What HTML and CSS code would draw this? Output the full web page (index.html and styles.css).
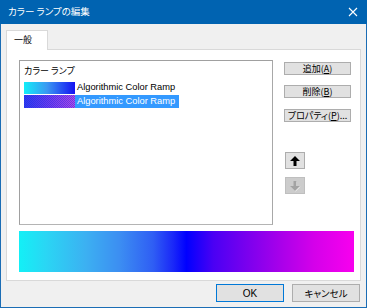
FILE: index.html
```html
<!DOCTYPE html>
<html lang="ja">
<head>
<meta charset="utf-8">
<title>カラー ランプの編集</title>
<link rel="stylesheet" href="styles.css">
</head>
<body>
<div class="window">
  <div class="titlebar">
    <span class="title">カラー ランプの編集</span>
    <svg class="close" width="10" height="10" viewBox="0 0 10 10"><path d="M1 1 L9 9 M9 1 L1 9" stroke="#fff" stroke-width="1.1" fill="none"/></svg>
  </div>
  <div class="client">
    <div class="tabs"><div class="tab">一般</div></div>
    <div class="panel">
      <div class="top">
        <div class="listbox">
          <div class="list-head">カラー ランプ</div>
          <div class="row">
            <span class="swatch sw1"></span><span class="label">Algorithmic Color Ramp</span>
          </div>
          <div class="row selected">
            <span class="swatch sw2"></span><span class="label">Algorithmic Color Ramp</span>
          </div>
        </div>
        <div class="side">
          <button class="btn">追加(<u>A</u>)</button>
          <button class="btn">削除(<u>B</u>)</button>
          <button class="btn">プロパティ(<u>P</u>)...</button>
          <div class="arrows">
            <button class="abtn"><svg width="12" height="12" viewBox="0 0 12 12"><path d="M6 1 L11 6 H7.5 V11 H4.5 V6 H1 Z" fill="#000"/></svg></button>
            <button class="abtn disabled"><svg width="12" height="12" viewBox="0 0 12 12"><path d="M6.5 11.5 L11.5 6.5 H8 V1.5 H5 V6.5 H1.5 Z" fill="#f4f4f4"/><path d="M6 11 L11 6 H7.5 V1 H4.5 V6 H1 Z" fill="#a3a3a3"/></svg></button>
          </div>
        </div>
      </div>
      <div class="preview"></div>
    </div>
    <div class="footer">
      <button class="fbtn default">OK</button>
      <button class="fbtn">キャンセル</button>
    </div>
  </div>
</div>
</body>
</html>
```
FILE: styles.css
```css
* { box-sizing: border-box; }
html, body { margin: 0; padding: 0; background: #f0f0f0; }
body {
  font-family: "Noto Sans CJK JP", "Liberation Sans", sans-serif;
  font-feature-settings: "palt";
  font-size: 9px;
}
.window {
  width: 367px;
  height: 308px;
  border: 1px solid #1b6db5;
  border-top: none;
  display: flex;
  flex-direction: column;
  background: #f0f0f0;
}
.titlebar {
  height: 24px;
  background: #0063b1;
  margin: 0 -1px;
  display: flex;
  align-items: center;
  justify-content: space-between;
  padding: 0 9px 0 8px;
  color: #fff;
}
.title { font-size: 9.5px; line-height: 1; margin-top: -1px; }
.close { display: block; margin-top: -1px; }
.client {
  flex: 1;
  padding: 6px 5px 0 5px;
  display: flex;
  flex-direction: column;
}
.tabs { display: flex; height: 19px; }
.tab {
  width: 42px;
  height: 20px;
  background: #fff;
  border: 1px solid #d9d9d9;
  border-bottom: none;
  padding: 3px 0 0 7px;
  line-height: 12px;
  position: relative;
  z-index: 1;
  color: #000;
}
.panel {
  width: 355px;
  height: 232px;
  background: #fff;
  border: 1px solid #d9d9d9;
  padding: 10px 5px 0 12px;
  display: flex;
  flex-direction: column;
}
.top { display: flex; }
.listbox {
  width: 254px;
  height: 165px;
  border: 1px solid #a0a0a0;
  border-right-color: #a8a8a8;
  border-bottom-color: #b4b4b4;
  padding: 1px 0 0 4px;
  display: flex;
  flex-direction: column;
  gap: 1px;
}
.list-head { height: 18px; line-height: 16px; padding-top: 1px; color: #000; }
.row { display: flex; align-items: center; height: 13px; }
.swatch { width: 51px; height: 12px; display: block; }
.sw1 { background: linear-gradient(to right, #12eef8, #3a98f2 45%, #1412f2); }
.sw2 {
  height: 13px;
  background-image:
    repeating-conic-gradient(rgba(30,40,220,0.45) 0 25%, transparent 0 50%),
    linear-gradient(to right, #2b3cf2, #6f3cf0 50%, #b44ae8);
  background-size: 2px 2px, 100% 100%;
}
.label {
  font-family: "Liberation Sans", sans-serif;
  font-size: 9.3px;
  height: 13px;
  line-height: 13px;
  padding: 0 4px 0 2px;
  color: #000;
}
.selected .label { background: #3399ff; color: #fff; }
.side {
  margin-left: 11px;
  padding-top: 2px;
  display: flex;
  flex-direction: column;
}
.btn {
  width: 67px;
  height: 13px;
  padding: 0;
  margin: 0 0 10px 0;
  background: #e1e1e1;
  border: 1px solid #adadad;
  font: inherit;
  font-size: 9px;
  line-height: 11px;
  color: #000;
}
.btn:nth-child(2) { margin-bottom: 11px; }
.btn u { text-decoration-thickness: 1px; text-underline-offset: 1px; }
.arrows {
  margin-top: 20px;
  display: flex;
  flex-direction: column;
  gap: 8px;
  padding-left: 1px;
}
.abtn {
  width: 20px;
  height: 17px;
  padding: 0;
  background: #e1e1e1;
  border: 1px solid #adadad;
  display: flex;
  align-items: center;
  justify-content: center;
}
.abtn svg { display: block; }
.abtn.disabled { background: #cccccc; border-color: #bfbfbf; }
.preview {
  margin-top: 6px;
  width: 335px;
  height: 41px;
  background: linear-gradient(to right,
    #13f0f6 0%, #2ad6f4 8%, #3cb0f2 20%, #3c8ef2 30%, #2f5ef4 40%, #1a28f8 46%, #0000ff 50%,
    #4a00f4 58%, #7a00ee 68%, #a800ea 78%, #d400ea 88%, #f800ee 100%);
}
.footer {
  display: flex;
  justify-content: flex-end;
  gap: 8px;
  padding: 3px 1px 0 0;
}
.fbtn {
  width: 68px;
  height: 18px;
  padding: 0;
  background: #e1e1e1;
  border: 1px solid #adadad;
  font: inherit;
  font-size: 9.5px;
  color: #000;
}
.fbtn.default { border: 1px solid #0078d7; box-shadow: inset 0 0 0 0 #0078d7; font-family: "Liberation Sans", sans-serif; font-size: 10px; }
```
